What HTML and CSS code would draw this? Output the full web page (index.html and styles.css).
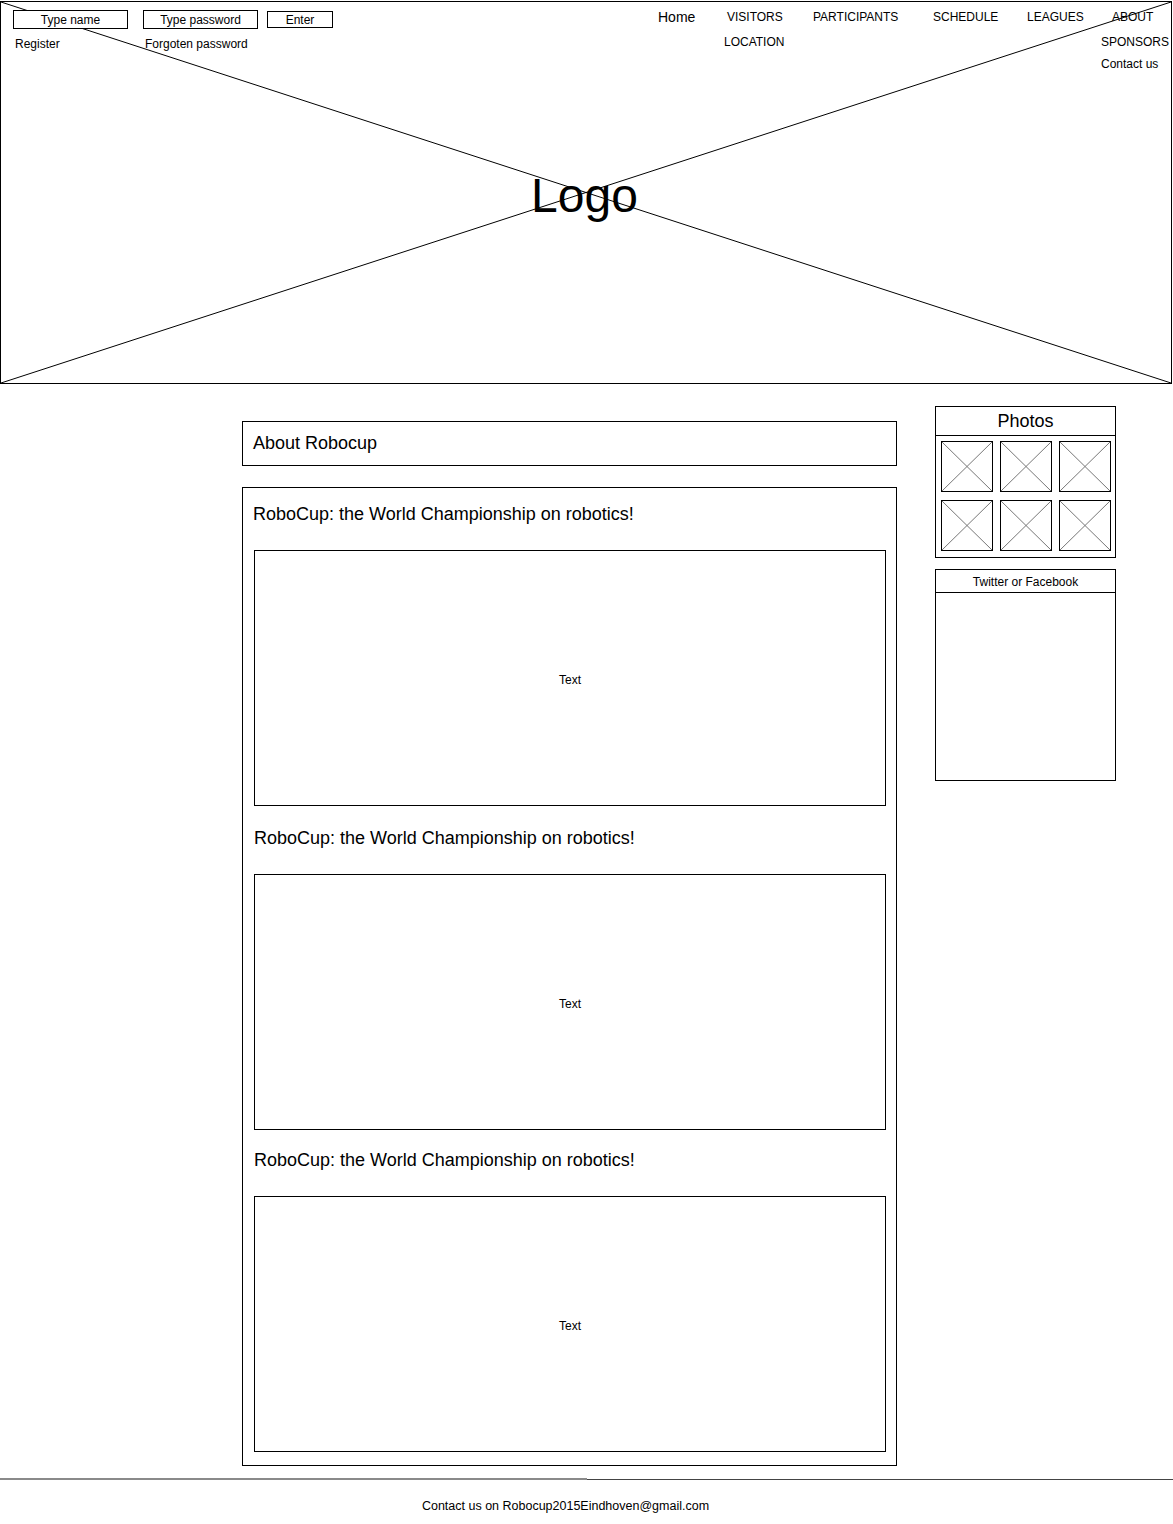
FILE: index.html
```html
<!DOCTYPE html>
<html lang="en">
<head>
    <meta charset="UTF-8">
    <meta name="viewport" content="width=device-width, initial-scale=1.0">
    <title>RoboCup 2015 Eindhoven</title>
    <link rel="stylesheet" href="styles.css">
</head>
<body>
    <header class="banner">
        <svg class="cross" viewBox="0 0 100 100" preserveAspectRatio="none">
            <line x1="0" y1="0" x2="100" y2="100" vector-effect="non-scaling-stroke"/>
            <line x1="100" y1="0" x2="0" y2="100" vector-effect="non-scaling-stroke"/>
        </svg>
        <div class="logo">Logo</div>
        <div class="topbar">
            <div class="login">
                <div class="login-row">
                    <span class="field">Type name</span>
                    <span class="field field-pass">Type password</span>
                    <span class="field field-enter">Enter</span>
                </div>
                <div class="login-links">
                    <a class="register">Register</a>
                    <a>Forgoten password</a>
                </div>
            </div>
            <nav class="menu">
                <a class="home">Home</a>
                <a class="visitors">VISITORS</a>
                <a>PARTICIPANTS</a>
                <a>SCHEDULE</a>
                <a>LEAGUES</a>
                <a class="about">ABOUT</a>
                <a class="location">LOCATION</a>
                <a class="sponsors">SPONSORS</a>
                <a class="contact">Contact us</a>
            </nav>
        </div>
    </header>

    <div class="page">
        <main class="content">
            <div class="box title-box">About Robocup</div>
            <div class="box article-list">
                <section class="article">
                    <h2>RoboCup: the World Championship on robotics!</h2>
                    <div class="text-box">Text</div>
                </section>
                <section class="article">
                    <h2>RoboCup: the World Championship on robotics!</h2>
                    <div class="text-box">Text</div>
                </section>
                <section class="article">
                    <h2>RoboCup: the World Championship on robotics!</h2>
                    <div class="text-box">Text</div>
                </section>
            </div>
        </main>
        <aside class="sidebar">
            <div class="box photos">
                <div class="box-head">Photos</div>
                <div class="photo-grid">
                    <svg class="thumb" viewBox="0 0 50 49" preserveAspectRatio="none"><line x1="0" y1="0" x2="50" y2="49"/><line x1="50" y1="0" x2="0" y2="49"/></svg>
                    <svg class="thumb" viewBox="0 0 50 49" preserveAspectRatio="none"><line x1="0" y1="0" x2="50" y2="49"/><line x1="50" y1="0" x2="0" y2="49"/></svg>
                    <svg class="thumb" viewBox="0 0 50 49" preserveAspectRatio="none"><line x1="0" y1="0" x2="50" y2="49"/><line x1="50" y1="0" x2="0" y2="49"/></svg>
                    <svg class="thumb" viewBox="0 0 50 49" preserveAspectRatio="none"><line x1="0" y1="0" x2="50" y2="49"/><line x1="50" y1="0" x2="0" y2="49"/></svg>
                    <svg class="thumb" viewBox="0 0 50 49" preserveAspectRatio="none"><line x1="0" y1="0" x2="50" y2="49"/><line x1="50" y1="0" x2="0" y2="49"/></svg>
                    <svg class="thumb" viewBox="0 0 50 49" preserveAspectRatio="none"><line x1="0" y1="0" x2="50" y2="49"/><line x1="50" y1="0" x2="0" y2="49"/></svg>
                </div>
            </div>
            <div class="box social">
                <div class="box-head small">Twitter or Facebook</div>
            </div>
        </aside>
    </div>

    <footer>
        <div class="rule">
            <span class="rule-left"></span>
            <span class="rule-right"></span>
        </div>
        <p>Contact us on Robocup2015Eindhoven@gmail.com</p>
    </footer>
</body>
</html>
```

FILE: styles.css
```css
body {
    font-family: "Liberation Sans", Arial, sans-serif;
    margin: 0;
    padding: 0;
    background: #fff;
    color: #000;
    width: 1173px;
}
a {
    color: #000;
    text-decoration: none;
    cursor: pointer;
}

/* header with logo placeholder */
.banner {
    display: grid;
    grid-template-columns: 100%;
    grid-template-rows: 100%;
    width: 1172px;
    height: 383px;
    margin-top: 1px;
    border: 1px solid #000;
    box-sizing: border-box;
}
.cross, .logo, .topbar {
    grid-area: 1 / 1;
}
.cross {
    width: 100%;
    height: 100%;
}
.cross line {
    stroke: #000;
    stroke-width: 1;
}
.logo {
    align-self: center;
    justify-self: center;
    font-size: 48px;
    margin-top: 6px;
    margin-right: 3px;
}
.topbar {
    display: flex;
    align-self: start;
    font-size: 12px;
}
.login {
    padding: 8px 0 0 12px;
}
.login-row {
    display: flex;
    align-items: flex-start;
}
.field {
    width: 115px;
    height: 19px;
    padding-top: 1px;
    border: 1px solid #000;
    box-sizing: border-box;
    text-align: center;
    line-height: 16px;
    background: #fff;
}
.field-pass {
    margin-left: 15px;
}
.field-enter {
    width: 66px;
    height: 17px;
    line-height: 14px;
    margin-top: 1px;
    margin-left: 9px;
}
.login-links {
    display: flex;
    margin-top: 8px;
    line-height: 15px;
}
.register {
    width: 130px;
    padding-left: 2px;
}
.menu {
    margin-left: auto;
    width: 513px;
    display: grid;
    grid-template-columns: 66px 89px 120px 94px 74px 70px;
    grid-template-rows: 24px 26px 18px;
    align-items: center;
    padding-top: 3px;
}
.menu .home {
    font-size: 14px;
}
.menu .visitors {
    padding-left: 3px;
}
.menu .about {
    padding-left: 11px;
}
.menu .location {
    grid-column: 2;
}
.menu .sponsors {
    grid-column: 6;
}
.menu .contact {
    grid-column: 6;
}

/* main area */
.page {
    display: flex;
    align-items: flex-start;
    gap: 38px;
    padding-left: 242px;
}
.box {
    border: 1px solid #000;
    box-sizing: border-box;
}
.content {
    width: 655px;
    margin-top: 37px;
}
.title-box {
    height: 45px;
    display: flex;
    align-items: center;
    padding-left: 10px;
    font-size: 18px;
}
.article-list {
    margin-top: 21px;
    padding: 0 11px 13px 11px;
}
.article h2 {
    font-size: 18px;
    font-weight: normal;
    line-height: 20px;
    margin: 20px 0 0 0;
}
.article:first-child h2 {
    margin-top: 16px;
    margin-left: -1px;
}
.article:nth-child(2) h2 {
    margin-top: 22px;
}
.text-box {
    width: 632px;
    height: 256px;
    margin-top: 26px;
    padding-top: 3px;
    border: 1px solid #000;
    box-sizing: border-box;
    display: flex;
    align-items: center;
    justify-content: center;
    font-size: 12px;
}

/* sidebar */
.sidebar {
    width: 181px;
    margin-top: 22px;
}
.box-head {
    height: 29px;
    padding-top: 1px;
    border-bottom: 1px solid #000;
    box-sizing: border-box;
    text-align: center;
    font-size: 18px;
    line-height: 27px;
}
.box-head.small {
    height: 23px;
    padding-top: 2px;
    font-size: 12px;
    line-height: 20px;
}
.photo-grid {
    display: grid;
    grid-template-columns: repeat(3, 52px);
    grid-auto-rows: 51px;
    column-gap: 7px;
    row-gap: 8px;
    padding: 5px 5px 6px 5px;
}
.thumb {
    width: 52px;
    height: 51px;
    border: 1px solid #000;
    box-sizing: border-box;
    display: block;
}
.thumb line {
    stroke: #777;
    stroke-width: 1;
    vector-effect: non-scaling-stroke;
}
.social {
    margin-top: 11px;
    height: 212px;
}

/* footer */
footer {
    margin-top: 12px;
    text-align: center;
}
.rule {
    display: flex;
    align-items: flex-start;
}
.rule-left {
    width: 587px;
    border-top: 2px solid #8a8a8a;
}
.rule-right {
    flex: 1;
    margin-top: 1px;
    border-top: 1px solid #444;
}
footer p {
    margin: 19px 0 0 0;
    padding-right: 42px;
    font-size: 12.5px;
    line-height: 15px;
    padding-bottom: 12px;
}
```
